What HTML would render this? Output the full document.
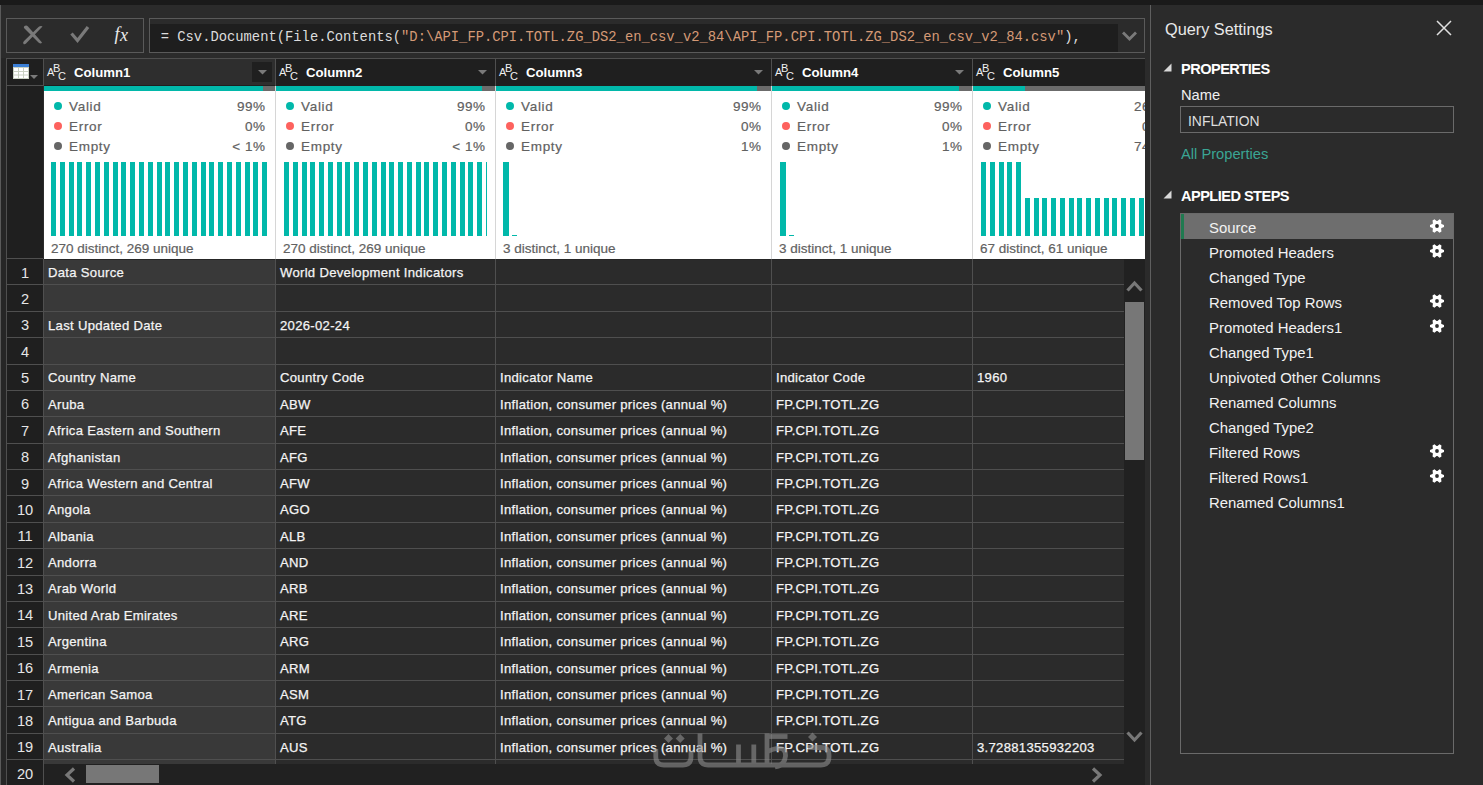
<!DOCTYPE html><html><head><meta charset="utf-8"><style>
html,body{margin:0;padding:0;}
body{width:1483px;height:785px;overflow:hidden;background:#2b2b2b;position:relative;font-family:"Liberation Sans",sans-serif;}
.a{position:absolute;}
.t{white-space:pre;line-height:20px;}
.mono{font-family:"Liberation Mono",monospace;font-size:13.82px;color:#dcdcdc;white-space:pre;line-height:20px;}
.hdr{font-weight:bold;font-size:13.2px;color:#ffffff;}
.abc{width:26px;height:26px;color:#f0f0f0;font-size:11px;}
.abc span{position:absolute;line-height:11px;}
.abc .A{left:1px;top:8px;}
.abc .B{left:7px;top:4px;}
.abc .C{left:12px;top:12px;}
.prof{font-size:13.5px;color:#616161;-webkit-text-stroke:0.2px #616161;}
.dist{font-size:13.5px;color:#616161;-webkit-text-stroke:0.2px #616161;}
.rn{font-size:14.6px;color:#e6e6e6;}
.cell{font-size:13.1px;letter-spacing:0.3px;color:#f4f4f4;-webkit-text-stroke:0.25px #f4f4f4;}
.qs{font-size:16.3px;color:#e8e8e8;}
.sect{font-weight:bold;font-size:14.6px;letter-spacing:-0.55px;color:#ffffff;}
.pn{font-size:14.7px;color:#f0f0f0;}
.infl{font-size:13.9px;color:#dedede;}
.step{font-size:14.9px;color:#f2f2f2;}
</style></head><body><div class="a" style="left:0px;top:0px;width:1483px;height:5px;background:#1a1a1a;"></div>
<div class="a" style="left:0px;top:5px;width:1px;height:780px;background:#5a5a5a;"></div>
<div class="a" style="left:1px;top:58px;width:5px;height:727px;background:#262626;"></div>
<div class="a" style="left:6px;top:18px;width:136px;height:33px;border:1px solid #5a5a5a;"></div>
<svg class="a" style="left:20px;top:23px" width="26" height="24" viewBox="0 0 26 24"><path d="M3.5 21 Q2.5 19.5 4 18 L18.5 4 Q20 2.8 22 3.2 L22.5 3.5 L6 20.5 Q4.8 21.8 3.5 21 Z" fill="#7a7a7a"/><path d="M4.5 3 Q6.5 2 8 3.5 L22 19.5 L21 20.5 Q19.5 20.5 18.5 19.5 L4 5 Q3.5 4 4.5 3 Z" fill="#7a7a7a"/></svg>
<svg class="a" style="left:69px;top:24px" width="22" height="20" viewBox="0 0 22 20"><path d="M2.5 9.5 L8.5 16.5 L19 3" stroke="#7a7a7a" stroke-width="3.2" fill="none"/></svg>
<div class="a" style="left:114.5px;top:18.6px;font-family:'Liberation Serif';font-style:italic;font-size:18px;color:#ececec;line-height:30px">f</div><div class="a" style="left:120px;top:19.6px;font-family:'Liberation Serif';font-style:italic;font-size:18px;color:#ececec;line-height:30px">x</div>
<div class="a" style="left:149px;top:18px;width:994px;height:33px;border:1px solid #5a5a5a;"></div>
<div class="a" style="left:150px;top:24px;width:968px;height:28px;background:#1e1e1e;"></div>
<div class="a mono" style="left:160.7px;top:26.7px;">= Csv.Document(File.Contents(<span style="color:#d59a76">"D:\API_FP.CPI.TOTL.ZG_DS2_en_csv_v2_84\API_FP.CPI.TOTL.ZG_DS2_en_csv_v2_84.csv"</span>),</div>
<svg class="a" style="left:1121px;top:30px" width="17" height="12" viewBox="0 0 17 12"><path d="M2 2.5 L8.5 9 L15 2.5" stroke="#7a7a7a" stroke-width="2.8" fill="none"/></svg>
<div class="a" style="left:6px;top:58px;width:1139px;height:1px;background:#4f4f4f;"></div>
<div class="a" style="left:6px;top:58px;width:1px;height:727px;background:#4f4f4f;"></div>
<div class="a" style="left:7px;top:59px;width:1138px;height:27px;background:#1f1f1f;"></div>
<svg class="a" style="left:13px;top:64px" width="26" height="16" viewBox="0 0 26 16">
<rect x="0" y="0" width="16" height="15" fill="#c9d1c2"/>
<rect x="0" y="0" width="16" height="3" fill="#3b7fd6"/>
<rect x="1" y="4" width="4" height="3" fill="#fff"/><rect x="6" y="4" width="4" height="3" fill="#fff"/><rect x="11" y="4" width="4" height="3" fill="#fff"/>
<rect x="1" y="8" width="4" height="2.5" fill="#fff"/><rect x="6" y="8" width="4" height="2.5" fill="#fff"/><rect x="11" y="8" width="4" height="2.5" fill="#fff"/>
<rect x="1" y="11.5" width="4" height="2.5" fill="#fff"/><rect x="6" y="11.5" width="4" height="2.5" fill="#fff"/><rect x="11" y="11.5" width="4" height="2.5" fill="#fff"/>
<path d="M17 11 L25 11 L21 15 Z" fill="#7a7a7a"/></svg>
<div class="a" style="left:7px;top:86px;width:36px;height:699px;background:#1f1f1f;"></div>
<div class="a" style="left:7px;top:85px;width:36px;height:1px;background:#4f4f4f;"></div>
<div class="a" style="left:43px;top:58px;width:1px;height:28px;background:#4f4f4f;"></div>
<div class="a" style="left:44px;top:59px;width:231px;height:26px;background:#2e2e2e;"></div>
<div class="a" style="left:252px;top:62px;width:20px;height:20px;background:#1f1f1f;"></div>
<div class="a abc" style="left:46px;top:59px"><span class="A">A</span><span class="B">B</span><span class="C">C</span></div>
<div class="a t hdr" style="left:74px;top:63.23px;">Column1</div>
<svg class="a" style="left:258px;top:70px" width="9" height="5" viewBox="0 0 9 5"><path d="M0 0 L9 0 L4.5 4.5 Z" fill="#7a7a7a"/></svg>
<div class="a" style="left:44px;top:86px;width:231px;height:5px;background:#6b6b6b;"></div>
<div class="a" style="left:44px;top:86px;width:219px;height:5px;background:#01b8aa;"></div>
<div class="a" style="left:44px;top:91px;width:231px;height:168px;background:#ffffff;"></div>
<div class="a" style="left:275px;top:58px;width:1px;height:28px;background:#4f4f4f;"></div>
<div class="a abc" style="left:278px;top:59px"><span class="A">A</span><span class="B">B</span><span class="C">C</span></div>
<div class="a t hdr" style="left:306px;top:63.23px;">Column2</div>
<svg class="a" style="left:478px;top:70px" width="9" height="5" viewBox="0 0 9 5"><path d="M0 0 L9 0 L4.5 4.5 Z" fill="#7a7a7a"/></svg>
<div class="a" style="left:276px;top:86px;width:219px;height:5px;background:#6b6b6b;"></div>
<div class="a" style="left:276px;top:86px;width:206px;height:5px;background:#01b8aa;"></div>
<div class="a" style="left:276px;top:91px;width:219px;height:168px;background:#ffffff;"></div>
<div class="a" style="left:495px;top:58px;width:1px;height:28px;background:#4f4f4f;"></div>
<div class="a abc" style="left:498px;top:59px"><span class="A">A</span><span class="B">B</span><span class="C">C</span></div>
<div class="a t hdr" style="left:526px;top:63.23px;">Column3</div>
<svg class="a" style="left:754px;top:70px" width="9" height="5" viewBox="0 0 9 5"><path d="M0 0 L9 0 L4.5 4.5 Z" fill="#7a7a7a"/></svg>
<div class="a" style="left:496px;top:86px;width:275px;height:5px;background:#6b6b6b;"></div>
<div class="a" style="left:496px;top:86px;width:261px;height:5px;background:#01b8aa;"></div>
<div class="a" style="left:496px;top:91px;width:275px;height:168px;background:#ffffff;"></div>
<div class="a" style="left:771px;top:58px;width:1px;height:28px;background:#4f4f4f;"></div>
<div class="a abc" style="left:774px;top:59px"><span class="A">A</span><span class="B">B</span><span class="C">C</span></div>
<div class="a t hdr" style="left:802px;top:63.23px;">Column4</div>
<svg class="a" style="left:955px;top:70px" width="9" height="5" viewBox="0 0 9 5"><path d="M0 0 L9 0 L4.5 4.5 Z" fill="#7a7a7a"/></svg>
<div class="a" style="left:772px;top:86px;width:200px;height:5px;background:#6b6b6b;"></div>
<div class="a" style="left:772px;top:86px;width:187px;height:5px;background:#01b8aa;"></div>
<div class="a" style="left:772px;top:91px;width:200px;height:168px;background:#ffffff;"></div>
<div class="a" style="left:972px;top:58px;width:1px;height:28px;background:#4f4f4f;"></div>
<div class="a abc" style="left:975px;top:59px"><span class="A">A</span><span class="B">B</span><span class="C">C</span></div>
<div class="a t hdr" style="left:1003px;top:63.23px;">Column5</div>
<div class="a" style="left:973px;top:86px;width:172px;height:5px;background:#6b6b6b;"></div>
<div class="a" style="left:973px;top:86px;width:52px;height:5px;background:#01b8aa;"></div>
<div class="a" style="left:973px;top:91px;width:172px;height:168px;background:#ffffff;"></div>
<div class="a" style="left:275px;top:86px;width:1px;height:173px;background:#d6d6d6;"></div>
<div class="a" style="left:495px;top:86px;width:1px;height:173px;background:#d6d6d6;"></div>
<div class="a" style="left:771px;top:86px;width:1px;height:173px;background:#d6d6d6;"></div>
<div class="a" style="left:972px;top:86px;width:1px;height:173px;background:#d6d6d6;"></div>
<div class="a" style="left:54px;top:102.2px;width:7.8px;height:7.8px;background:#01b8aa;border-radius:50%;"></div>
<div class="a t prof" style="left:69px;top:97.02px;letter-spacing:0.7px;">Valid</div>
<div class="a t prof" style="left:44px;top:97.02px;width:221.5px;text-align:right;letter-spacing:0.5px;">99%</div>
<div class="a" style="left:54px;top:122.2px;width:7.8px;height:7.8px;background:#fd625e;border-radius:50%;"></div>
<div class="a t prof" style="left:69px;top:117.02px;letter-spacing:0.7px;">Error</div>
<div class="a t prof" style="left:44px;top:117.02px;width:221.5px;text-align:right;letter-spacing:0.5px;">0%</div>
<div class="a" style="left:54px;top:142.2px;width:7.8px;height:7.8px;background:#666666;border-radius:50%;"></div>
<div class="a t prof" style="left:69px;top:137.02px;letter-spacing:0.7px;">Empty</div>
<div class="a t prof" style="left:44px;top:137.02px;width:221.5px;text-align:right;letter-spacing:0.5px;">&lt; 1%</div>
<div class="a t dist" style="left:51px;top:239.32px;">270 distinct, 269 unique</div>
<div class="a" style="left:286px;top:102.2px;width:7.8px;height:7.8px;background:#01b8aa;border-radius:50%;"></div>
<div class="a t prof" style="left:301px;top:97.02px;letter-spacing:0.7px;">Valid</div>
<div class="a t prof" style="left:276px;top:97.02px;width:209.5px;text-align:right;letter-spacing:0.5px;">99%</div>
<div class="a" style="left:286px;top:122.2px;width:7.8px;height:7.8px;background:#fd625e;border-radius:50%;"></div>
<div class="a t prof" style="left:301px;top:117.02px;letter-spacing:0.7px;">Error</div>
<div class="a t prof" style="left:276px;top:117.02px;width:209.5px;text-align:right;letter-spacing:0.5px;">0%</div>
<div class="a" style="left:286px;top:142.2px;width:7.8px;height:7.8px;background:#666666;border-radius:50%;"></div>
<div class="a t prof" style="left:301px;top:137.02px;letter-spacing:0.7px;">Empty</div>
<div class="a t prof" style="left:276px;top:137.02px;width:209.5px;text-align:right;letter-spacing:0.5px;">&lt; 1%</div>
<div class="a t dist" style="left:283px;top:239.32px;">270 distinct, 269 unique</div>
<div class="a" style="left:506px;top:102.2px;width:7.8px;height:7.8px;background:#01b8aa;border-radius:50%;"></div>
<div class="a t prof" style="left:521px;top:97.02px;letter-spacing:0.7px;">Valid</div>
<div class="a t prof" style="left:496px;top:97.02px;width:265.5px;text-align:right;letter-spacing:0.5px;">99%</div>
<div class="a" style="left:506px;top:122.2px;width:7.8px;height:7.8px;background:#fd625e;border-radius:50%;"></div>
<div class="a t prof" style="left:521px;top:117.02px;letter-spacing:0.7px;">Error</div>
<div class="a t prof" style="left:496px;top:117.02px;width:265.5px;text-align:right;letter-spacing:0.5px;">0%</div>
<div class="a" style="left:506px;top:142.2px;width:7.8px;height:7.8px;background:#666666;border-radius:50%;"></div>
<div class="a t prof" style="left:521px;top:137.02px;letter-spacing:0.7px;">Empty</div>
<div class="a t prof" style="left:496px;top:137.02px;width:265.5px;text-align:right;letter-spacing:0.5px;">1%</div>
<div class="a t dist" style="left:503px;top:239.32px;">3 distinct, 1 unique</div>
<div class="a" style="left:782px;top:102.2px;width:7.8px;height:7.8px;background:#01b8aa;border-radius:50%;"></div>
<div class="a t prof" style="left:797px;top:97.02px;letter-spacing:0.7px;">Valid</div>
<div class="a t prof" style="left:772px;top:97.02px;width:190.5px;text-align:right;letter-spacing:0.5px;">99%</div>
<div class="a" style="left:782px;top:122.2px;width:7.8px;height:7.8px;background:#fd625e;border-radius:50%;"></div>
<div class="a t prof" style="left:797px;top:117.02px;letter-spacing:0.7px;">Error</div>
<div class="a t prof" style="left:772px;top:117.02px;width:190.5px;text-align:right;letter-spacing:0.5px;">0%</div>
<div class="a" style="left:782px;top:142.2px;width:7.8px;height:7.8px;background:#666666;border-radius:50%;"></div>
<div class="a t prof" style="left:797px;top:137.02px;letter-spacing:0.7px;">Empty</div>
<div class="a t prof" style="left:772px;top:137.02px;width:190.5px;text-align:right;letter-spacing:0.5px;">1%</div>
<div class="a t dist" style="left:779px;top:239.32px;">3 distinct, 1 unique</div>
<div class="a" style="left:983px;top:102.2px;width:7.8px;height:7.8px;background:#01b8aa;border-radius:50%;"></div>
<div class="a t prof" style="left:998px;top:97.02px;letter-spacing:0.7px;">Valid</div>
<div class="a t prof" style="left:973px;top:97.02px;width:189.5px;text-align:right;letter-spacing:0.5px;">26%</div>
<div class="a" style="left:983px;top:122.2px;width:7.8px;height:7.8px;background:#fd625e;border-radius:50%;"></div>
<div class="a t prof" style="left:998px;top:117.02px;letter-spacing:0.7px;">Error</div>
<div class="a t prof" style="left:973px;top:117.02px;width:189.5px;text-align:right;letter-spacing:0.5px;">0%</div>
<div class="a" style="left:983px;top:142.2px;width:7.8px;height:7.8px;background:#666666;border-radius:50%;"></div>
<div class="a t prof" style="left:998px;top:137.02px;letter-spacing:0.7px;">Empty</div>
<div class="a t prof" style="left:973px;top:137.02px;width:189.5px;text-align:right;letter-spacing:0.5px;">74%</div>
<div class="a t dist" style="left:980px;top:239.32px;">67 distinct, 61 unique</div>
<div class="a" style="left:51px;top:162px;width:5px;height:74px;background:#01b8aa;"></div>
<div class="a" style="left:60px;top:162px;width:5px;height:74px;background:#01b8aa;"></div>
<div class="a" style="left:69px;top:162px;width:5px;height:74px;background:#01b8aa;"></div>
<div class="a" style="left:77px;top:162px;width:5px;height:74px;background:#01b8aa;"></div>
<div class="a" style="left:86px;top:162px;width:5px;height:74px;background:#01b8aa;"></div>
<div class="a" style="left:95px;top:162px;width:5px;height:74px;background:#01b8aa;"></div>
<div class="a" style="left:104px;top:162px;width:5px;height:74px;background:#01b8aa;"></div>
<div class="a" style="left:113px;top:162px;width:5px;height:74px;background:#01b8aa;"></div>
<div class="a" style="left:121px;top:162px;width:5px;height:74px;background:#01b8aa;"></div>
<div class="a" style="left:130px;top:162px;width:5px;height:74px;background:#01b8aa;"></div>
<div class="a" style="left:139px;top:162px;width:5px;height:74px;background:#01b8aa;"></div>
<div class="a" style="left:148px;top:162px;width:5px;height:74px;background:#01b8aa;"></div>
<div class="a" style="left:157px;top:162px;width:5px;height:74px;background:#01b8aa;"></div>
<div class="a" style="left:165px;top:162px;width:5px;height:74px;background:#01b8aa;"></div>
<div class="a" style="left:174px;top:162px;width:5px;height:74px;background:#01b8aa;"></div>
<div class="a" style="left:183px;top:162px;width:5px;height:74px;background:#01b8aa;"></div>
<div class="a" style="left:192px;top:162px;width:5px;height:74px;background:#01b8aa;"></div>
<div class="a" style="left:201px;top:162px;width:5px;height:74px;background:#01b8aa;"></div>
<div class="a" style="left:209px;top:162px;width:5px;height:74px;background:#01b8aa;"></div>
<div class="a" style="left:218px;top:162px;width:5px;height:74px;background:#01b8aa;"></div>
<div class="a" style="left:227px;top:162px;width:5px;height:74px;background:#01b8aa;"></div>
<div class="a" style="left:236px;top:162px;width:5px;height:74px;background:#01b8aa;"></div>
<div class="a" style="left:245px;top:162px;width:5px;height:74px;background:#01b8aa;"></div>
<div class="a" style="left:253px;top:162px;width:5px;height:74px;background:#01b8aa;"></div>
<div class="a" style="left:262px;top:162px;width:5px;height:74px;background:#01b8aa;"></div>
<div class="a" style="left:284px;top:162px;width:5px;height:74px;background:#01b8aa;"></div>
<div class="a" style="left:293px;top:162px;width:5px;height:74px;background:#01b8aa;"></div>
<div class="a" style="left:302px;top:162px;width:5px;height:74px;background:#01b8aa;"></div>
<div class="a" style="left:310px;top:162px;width:5px;height:74px;background:#01b8aa;"></div>
<div class="a" style="left:319px;top:162px;width:5px;height:74px;background:#01b8aa;"></div>
<div class="a" style="left:328px;top:162px;width:5px;height:74px;background:#01b8aa;"></div>
<div class="a" style="left:337px;top:162px;width:5px;height:74px;background:#01b8aa;"></div>
<div class="a" style="left:345px;top:162px;width:5px;height:74px;background:#01b8aa;"></div>
<div class="a" style="left:354px;top:162px;width:5px;height:74px;background:#01b8aa;"></div>
<div class="a" style="left:363px;top:162px;width:5px;height:74px;background:#01b8aa;"></div>
<div class="a" style="left:372px;top:162px;width:5px;height:74px;background:#01b8aa;"></div>
<div class="a" style="left:381px;top:162px;width:5px;height:74px;background:#01b8aa;"></div>
<div class="a" style="left:389px;top:162px;width:5px;height:74px;background:#01b8aa;"></div>
<div class="a" style="left:398px;top:162px;width:5px;height:74px;background:#01b8aa;"></div>
<div class="a" style="left:407px;top:162px;width:5px;height:74px;background:#01b8aa;"></div>
<div class="a" style="left:416px;top:162px;width:5px;height:74px;background:#01b8aa;"></div>
<div class="a" style="left:424px;top:162px;width:5px;height:74px;background:#01b8aa;"></div>
<div class="a" style="left:433px;top:162px;width:5px;height:74px;background:#01b8aa;"></div>
<div class="a" style="left:442px;top:162px;width:5px;height:74px;background:#01b8aa;"></div>
<div class="a" style="left:451px;top:162px;width:5px;height:74px;background:#01b8aa;"></div>
<div class="a" style="left:460px;top:162px;width:5px;height:74px;background:#01b8aa;"></div>
<div class="a" style="left:468px;top:162px;width:5px;height:74px;background:#01b8aa;"></div>
<div class="a" style="left:477px;top:162px;width:5px;height:74px;background:#01b8aa;"></div>
<div class="a" style="left:486px;top:162px;width:1px;height:74px;background:#01b8aa;"></div>
<div class="a" style="left:503px;top:162px;width:6px;height:74px;background:#01b8aa;"></div>
<div class="a" style="left:512px;top:235px;width:5px;height:1px;background:#01b8aa;"></div>
<div class="a" style="left:780px;top:162px;width:6px;height:74px;background:#01b8aa;"></div>
<div class="a" style="left:789px;top:235px;width:5px;height:1px;background:#01b8aa;"></div>
<div class="a" style="left:981px;top:162px;width:5px;height:74px;background:#01b8aa;"></div>
<div class="a" style="left:990px;top:162px;width:5px;height:74px;background:#01b8aa;"></div>
<div class="a" style="left:999px;top:162px;width:5px;height:74px;background:#01b8aa;"></div>
<div class="a" style="left:1007px;top:162px;width:5px;height:74px;background:#01b8aa;"></div>
<div class="a" style="left:1016px;top:162px;width:5px;height:74px;background:#01b8aa;"></div>
<div class="a" style="left:1025px;top:198px;width:5px;height:38px;background:#01b8aa;"></div>
<div class="a" style="left:1034px;top:198px;width:5px;height:38px;background:#01b8aa;"></div>
<div class="a" style="left:1042px;top:198px;width:5px;height:38px;background:#01b8aa;"></div>
<div class="a" style="left:1051px;top:198px;width:5px;height:38px;background:#01b8aa;"></div>
<div class="a" style="left:1060px;top:198px;width:5px;height:38px;background:#01b8aa;"></div>
<div class="a" style="left:1069px;top:198px;width:5px;height:38px;background:#01b8aa;"></div>
<div class="a" style="left:1077px;top:198px;width:5px;height:38px;background:#01b8aa;"></div>
<div class="a" style="left:1086px;top:198px;width:5px;height:38px;background:#01b8aa;"></div>
<div class="a" style="left:1095px;top:198px;width:5px;height:38px;background:#01b8aa;"></div>
<div class="a" style="left:1104px;top:198px;width:5px;height:38px;background:#01b8aa;"></div>
<div class="a" style="left:1112px;top:198px;width:5px;height:38px;background:#01b8aa;"></div>
<div class="a" style="left:1121px;top:198px;width:5px;height:38px;background:#01b8aa;"></div>
<div class="a" style="left:1130px;top:198px;width:5px;height:38px;background:#01b8aa;"></div>
<div class="a" style="left:1139px;top:198px;width:5px;height:38px;background:#01b8aa;"></div>
<div class="a" style="left:44px;top:259px;width:231px;height:526px;background:#393939;"></div>
<div class="a" style="left:276px;top:259px;width:848px;height:526px;background:#2b2b2b;"></div>
<div class="a" style="left:7px;top:258px;width:36px;height:1px;background:#4f4f4f;"></div>
<div class="a" style="left:44px;top:259px;width:1080px;height:1px;background:#262626;"></div>
<div class="a" style="left:7px;top:284px;width:1117px;height:1px;background:#4f4f4f;"></div>
<div class="a" style="left:7px;top:311px;width:1117px;height:1px;background:#4f4f4f;"></div>
<div class="a" style="left:7px;top:337px;width:1117px;height:1px;background:#4f4f4f;"></div>
<div class="a" style="left:7px;top:364px;width:1117px;height:1px;background:#4f4f4f;"></div>
<div class="a" style="left:7px;top:390px;width:1117px;height:1px;background:#4f4f4f;"></div>
<div class="a" style="left:7px;top:416px;width:1117px;height:1px;background:#4f4f4f;"></div>
<div class="a" style="left:7px;top:443px;width:1117px;height:1px;background:#4f4f4f;"></div>
<div class="a" style="left:7px;top:469px;width:1117px;height:1px;background:#4f4f4f;"></div>
<div class="a" style="left:7px;top:495px;width:1117px;height:1px;background:#4f4f4f;"></div>
<div class="a" style="left:7px;top:522px;width:1117px;height:1px;background:#4f4f4f;"></div>
<div class="a" style="left:7px;top:548px;width:1117px;height:1px;background:#4f4f4f;"></div>
<div class="a" style="left:7px;top:575px;width:1117px;height:1px;background:#4f4f4f;"></div>
<div class="a" style="left:7px;top:601px;width:1117px;height:1px;background:#4f4f4f;"></div>
<div class="a" style="left:7px;top:627px;width:1117px;height:1px;background:#4f4f4f;"></div>
<div class="a" style="left:7px;top:654px;width:1117px;height:1px;background:#4f4f4f;"></div>
<div class="a" style="left:7px;top:680px;width:1117px;height:1px;background:#4f4f4f;"></div>
<div class="a" style="left:7px;top:706px;width:1117px;height:1px;background:#4f4f4f;"></div>
<div class="a" style="left:7px;top:733px;width:1117px;height:1px;background:#4f4f4f;"></div>
<div class="a" style="left:7px;top:759px;width:1117px;height:1px;background:#4f4f4f;"></div>
<div class="a" style="left:7px;top:786px;width:1117px;height:1px;background:#4f4f4f;"></div>
<div class="a" style="left:43px;top:259px;width:1px;height:526px;background:#4f4f4f;"></div>
<div class="a" style="left:275px;top:259px;width:1px;height:526px;background:#4f4f4f;"></div>
<div class="a" style="left:495px;top:259px;width:1px;height:526px;background:#4f4f4f;"></div>
<div class="a" style="left:771px;top:259px;width:1px;height:526px;background:#4f4f4f;"></div>
<div class="a" style="left:972px;top:259px;width:1px;height:526px;background:#4f4f4f;"></div>
<div class="a t rn" style="left:7px;top:262.94px;width:36px;text-align:center;">1</div>
<div class="a t cell" style="left:48px;top:263.46px;">Data Source</div>
<div class="a t cell" style="left:280px;top:263.46px;">World Development Indicators</div>
<div class="a t rn" style="left:7px;top:288.94px;width:36px;text-align:center;">2</div>
<div class="a t rn" style="left:7px;top:314.94px;width:36px;text-align:center;">3</div>
<div class="a t cell" style="left:48px;top:316.46px;">Last Updated Date</div>
<div class="a t cell" style="left:280px;top:316.46px;">2026-02-24</div>
<div class="a t rn" style="left:7px;top:341.94px;width:36px;text-align:center;">4</div>
<div class="a t rn" style="left:7px;top:367.94px;width:36px;text-align:center;">5</div>
<div class="a t cell" style="left:48px;top:368.46px;">Country Name</div>
<div class="a t cell" style="left:280px;top:368.46px;">Country Code</div>
<div class="a t cell" style="left:500px;top:368.46px;">Indicator Name</div>
<div class="a t cell" style="left:776px;top:368.46px;">Indicator Code</div>
<div class="a t cell" style="left:977px;top:368.46px;">1960</div>
<div class="a t rn" style="left:7px;top:393.94px;width:36px;text-align:center;">6</div>
<div class="a t cell" style="left:48px;top:395.46px;">Aruba</div>
<div class="a t cell" style="left:280px;top:395.46px;">ABW</div>
<div class="a t cell" style="left:500px;top:395.46px;">Inflation, consumer prices (annual %)</div>
<div class="a t cell" style="left:776px;top:395.46px;">FP.CPI.TOTL.ZG</div>
<div class="a t rn" style="left:7px;top:420.94px;width:36px;text-align:center;">7</div>
<div class="a t cell" style="left:48px;top:421.46px;">Africa Eastern and Southern</div>
<div class="a t cell" style="left:280px;top:421.46px;">AFE</div>
<div class="a t cell" style="left:500px;top:421.46px;">Inflation, consumer prices (annual %)</div>
<div class="a t cell" style="left:776px;top:421.46px;">FP.CPI.TOTL.ZG</div>
<div class="a t rn" style="left:7px;top:446.94px;width:36px;text-align:center;">8</div>
<div class="a t cell" style="left:48px;top:448.46px;">Afghanistan</div>
<div class="a t cell" style="left:280px;top:448.46px;">AFG</div>
<div class="a t cell" style="left:500px;top:448.46px;">Inflation, consumer prices (annual %)</div>
<div class="a t cell" style="left:776px;top:448.46px;">FP.CPI.TOTL.ZG</div>
<div class="a t rn" style="left:7px;top:473.94px;width:36px;text-align:center;">9</div>
<div class="a t cell" style="left:48px;top:474.46px;">Africa Western and Central</div>
<div class="a t cell" style="left:280px;top:474.46px;">AFW</div>
<div class="a t cell" style="left:500px;top:474.46px;">Inflation, consumer prices (annual %)</div>
<div class="a t cell" style="left:776px;top:474.46px;">FP.CPI.TOTL.ZG</div>
<div class="a t rn" style="left:7px;top:499.94px;width:36px;text-align:center;">10</div>
<div class="a t cell" style="left:48px;top:500.46px;">Angola</div>
<div class="a t cell" style="left:280px;top:500.46px;">AGO</div>
<div class="a t cell" style="left:500px;top:500.46px;">Inflation, consumer prices (annual %)</div>
<div class="a t cell" style="left:776px;top:500.46px;">FP.CPI.TOTL.ZG</div>
<div class="a t rn" style="left:7px;top:525.94px;width:36px;text-align:center;">11</div>
<div class="a t cell" style="left:48px;top:527.46px;">Albania</div>
<div class="a t cell" style="left:280px;top:527.46px;">ALB</div>
<div class="a t cell" style="left:500px;top:527.46px;">Inflation, consumer prices (annual %)</div>
<div class="a t cell" style="left:776px;top:527.46px;">FP.CPI.TOTL.ZG</div>
<div class="a t rn" style="left:7px;top:552.94px;width:36px;text-align:center;">12</div>
<div class="a t cell" style="left:48px;top:553.46px;">Andorra</div>
<div class="a t cell" style="left:280px;top:553.46px;">AND</div>
<div class="a t cell" style="left:500px;top:553.46px;">Inflation, consumer prices (annual %)</div>
<div class="a t cell" style="left:776px;top:553.46px;">FP.CPI.TOTL.ZG</div>
<div class="a t rn" style="left:7px;top:578.94px;width:36px;text-align:center;">13</div>
<div class="a t cell" style="left:48px;top:579.46px;">Arab World</div>
<div class="a t cell" style="left:280px;top:579.46px;">ARB</div>
<div class="a t cell" style="left:500px;top:579.46px;">Inflation, consumer prices (annual %)</div>
<div class="a t cell" style="left:776px;top:579.46px;">FP.CPI.TOTL.ZG</div>
<div class="a t rn" style="left:7px;top:604.94px;width:36px;text-align:center;">14</div>
<div class="a t cell" style="left:48px;top:606.46px;">United Arab Emirates</div>
<div class="a t cell" style="left:280px;top:606.46px;">ARE</div>
<div class="a t cell" style="left:500px;top:606.46px;">Inflation, consumer prices (annual %)</div>
<div class="a t cell" style="left:776px;top:606.46px;">FP.CPI.TOTL.ZG</div>
<div class="a t rn" style="left:7px;top:631.94px;width:36px;text-align:center;">15</div>
<div class="a t cell" style="left:48px;top:632.46px;">Argentina</div>
<div class="a t cell" style="left:280px;top:632.46px;">ARG</div>
<div class="a t cell" style="left:500px;top:632.46px;">Inflation, consumer prices (annual %)</div>
<div class="a t cell" style="left:776px;top:632.46px;">FP.CPI.TOTL.ZG</div>
<div class="a t rn" style="left:7px;top:657.94px;width:36px;text-align:center;">16</div>
<div class="a t cell" style="left:48px;top:659.46px;">Armenia</div>
<div class="a t cell" style="left:280px;top:659.46px;">ARM</div>
<div class="a t cell" style="left:500px;top:659.46px;">Inflation, consumer prices (annual %)</div>
<div class="a t cell" style="left:776px;top:659.46px;">FP.CPI.TOTL.ZG</div>
<div class="a t rn" style="left:7px;top:684.94px;width:36px;text-align:center;">17</div>
<div class="a t cell" style="left:48px;top:685.46px;">American Samoa</div>
<div class="a t cell" style="left:280px;top:685.46px;">ASM</div>
<div class="a t cell" style="left:500px;top:685.46px;">Inflation, consumer prices (annual %)</div>
<div class="a t cell" style="left:776px;top:685.46px;">FP.CPI.TOTL.ZG</div>
<div class="a t rn" style="left:7px;top:710.94px;width:36px;text-align:center;">18</div>
<div class="a t cell" style="left:48px;top:711.46px;">Antigua and Barbuda</div>
<div class="a t cell" style="left:280px;top:711.46px;">ATG</div>
<div class="a t cell" style="left:500px;top:711.46px;">Inflation, consumer prices (annual %)</div>
<div class="a t cell" style="left:776px;top:711.46px;">FP.CPI.TOTL.ZG</div>
<div class="a t rn" style="left:7px;top:736.94px;width:36px;text-align:center;">19</div>
<div class="a t cell" style="left:48px;top:738.46px;">Australia</div>
<div class="a t cell" style="left:280px;top:738.46px;">AUS</div>
<div class="a t cell" style="left:500px;top:738.46px;">Inflation, consumer prices (annual %)</div>
<div class="a t cell" style="left:776px;top:738.46px;">FP.CPI.TOTL.ZG</div>
<div class="a t cell" style="left:977px;top:738.46px;">3.72881355932203</div>
<div class="a t rn" style="left:7px;top:763.94px;width:36px;text-align:center;">20</div>
<div class="a" style="left:1124px;top:259px;width:21px;height:505px;background:#212121;"></div>
<svg class="a" style="left:1126px;top:279px" width="17" height="14" viewBox="0 0 17 14"><path d="M1.5 11.5 L8.5 4 L15.5 11.5" stroke="#787878" stroke-width="3.2" fill="none"/></svg>
<div class="a" style="left:1125px;top:302px;width:19px;height:158px;background:#777777;"></div>
<svg class="a" style="left:1126px;top:730px" width="17" height="14" viewBox="0 0 17 14"><path d="M1.5 2.5 L8.5 10 L15.5 2.5" stroke="#787878" stroke-width="3.2" fill="none"/></svg>
<div class="a" style="left:44px;top:764px;width:1101px;height:21px;background:#212121;"></div>
<svg class="a" style="left:63px;top:767px" width="14" height="16" viewBox="0 0 14 16"><path d="M11 1.5 L4 8 L11 14.5" stroke="#787878" stroke-width="3.2" fill="none"/></svg>
<div class="a" style="left:86px;top:765px;width:73px;height:18px;background:#777777;"></div>
<svg class="a" style="left:1090px;top:767px" width="14" height="16" viewBox="0 0 14 16"><path d="M3 1.5 L10 8 L3 14.5" stroke="#787878" stroke-width="3.2" fill="none"/></svg>
<div class="a" style="left:1145px;top:5px;width:6px;height:780px;background:#2b2b2b;"></div>
<div class="a" style="left:1150px;top:5px;width:1px;height:780px;background:#5f5f5f;"></div>
<div class="a" style="left:1151px;top:5px;width:332px;height:780px;background:#2b2b2b;"></div>
<div class="a t qs" style="left:1165px;top:19.35px;">Query Settings</div>
<svg class="a" style="left:1435px;top:19px" width="18" height="18" viewBox="0 0 18 18"><path d="M2 2 L16 16 M16 2 L2 16" stroke="#e0e0e0" stroke-width="1.5" fill="none"/></svg>
<svg class="a" style="left:1163px;top:63px" width="9" height="9" viewBox="0 0 9 9"><path d="M8.5 0.5 L8.5 8.5 L0.5 8.5 Z" fill="#d8d8d8"/></svg>
<div class="a t sect" style="left:1181px;top:58.94px;">PROPERTIES</div>
<div class="a t pn" style="left:1181px;top:84.91px;">Name</div>
<div class="a" style="left:1180px;top:106px;width:272px;height:25px;border:1px solid #6a6a6a;"></div>
<div class="a t infl" style="left:1188px;top:111.18px;">INFLATION</div>
<div class="a t pn" style="left:1181px;top:143.91px;color:#3aa594;">All Properties</div>
<svg class="a" style="left:1163px;top:190px" width="9" height="9" viewBox="0 0 9 9"><path d="M8.5 0.5 L8.5 8.5 L0.5 8.5 Z" fill="#d8d8d8"/></svg>
<div class="a t sect" style="left:1181px;top:185.94px;">APPLIED STEPS</div>
<div class="a" style="left:1180px;top:213px;width:272px;height:539px;border:1px solid #6a6a6a;"></div>
<div class="a" style="left:1181px;top:214px;width:272px;height:25px;background:#6e6e6e;"></div>
<div class="a" style="left:1181px;top:214px;width:3px;height:25px;background:#1f7a50;"></div>
<div class="a t step" style="left:1209px;top:217.74px;">Source</div>
<svg class="a" style="left:1429px;top:218px" width="16" height="16" viewBox="0 0 16 16"><path d="M15.01 6.89 L15.01 9.11 L12.53 10.11 L12.10 10.87 L12.47 13.52 L10.54 14.63 L8.44 12.98 L7.56 12.98 L5.46 14.63 L3.53 13.52 L3.90 10.87 L3.47 10.11 L0.99 9.11 L0.99 6.89 L3.47 5.89 L3.90 5.13 L3.53 2.48 L5.46 1.37 L7.56 3.02 L8.44 3.02 L10.54 1.37 L12.47 2.48 L12.10 5.13 L12.53 5.89 Z" fill="#ffffff"/><circle cx="8" cy="8" r="1.9" fill="#2e2e2e"/></svg>
<div class="a t step" style="left:1209px;top:242.74px;">Promoted Headers</div>
<svg class="a" style="left:1429px;top:243px" width="16" height="16" viewBox="0 0 16 16"><path d="M15.01 6.89 L15.01 9.11 L12.53 10.11 L12.10 10.87 L12.47 13.52 L10.54 14.63 L8.44 12.98 L7.56 12.98 L5.46 14.63 L3.53 13.52 L3.90 10.87 L3.47 10.11 L0.99 9.11 L0.99 6.89 L3.47 5.89 L3.90 5.13 L3.53 2.48 L5.46 1.37 L7.56 3.02 L8.44 3.02 L10.54 1.37 L12.47 2.48 L12.10 5.13 L12.53 5.89 Z" fill="#ffffff"/><circle cx="8" cy="8" r="1.9" fill="#2e2e2e"/></svg>
<div class="a t step" style="left:1209px;top:267.74px;">Changed Type</div>
<div class="a t step" style="left:1209px;top:292.74px;">Removed Top Rows</div>
<svg class="a" style="left:1429px;top:293px" width="16" height="16" viewBox="0 0 16 16"><path d="M15.01 6.89 L15.01 9.11 L12.53 10.11 L12.10 10.87 L12.47 13.52 L10.54 14.63 L8.44 12.98 L7.56 12.98 L5.46 14.63 L3.53 13.52 L3.90 10.87 L3.47 10.11 L0.99 9.11 L0.99 6.89 L3.47 5.89 L3.90 5.13 L3.53 2.48 L5.46 1.37 L7.56 3.02 L8.44 3.02 L10.54 1.37 L12.47 2.48 L12.10 5.13 L12.53 5.89 Z" fill="#ffffff"/><circle cx="8" cy="8" r="1.9" fill="#2e2e2e"/></svg>
<div class="a t step" style="left:1209px;top:317.74px;">Promoted Headers1</div>
<svg class="a" style="left:1429px;top:318px" width="16" height="16" viewBox="0 0 16 16"><path d="M15.01 6.89 L15.01 9.11 L12.53 10.11 L12.10 10.87 L12.47 13.52 L10.54 14.63 L8.44 12.98 L7.56 12.98 L5.46 14.63 L3.53 13.52 L3.90 10.87 L3.47 10.11 L0.99 9.11 L0.99 6.89 L3.47 5.89 L3.90 5.13 L3.53 2.48 L5.46 1.37 L7.56 3.02 L8.44 3.02 L10.54 1.37 L12.47 2.48 L12.10 5.13 L12.53 5.89 Z" fill="#ffffff"/><circle cx="8" cy="8" r="1.9" fill="#2e2e2e"/></svg>
<div class="a t step" style="left:1209px;top:342.74px;">Changed Type1</div>
<div class="a t step" style="left:1209px;top:367.74px;">Unpivoted Other Columns</div>
<div class="a t step" style="left:1209px;top:392.74px;">Renamed Columns</div>
<div class="a t step" style="left:1209px;top:417.74px;">Changed Type2</div>
<div class="a t step" style="left:1209px;top:442.74px;">Filtered Rows</div>
<svg class="a" style="left:1429px;top:443px" width="16" height="16" viewBox="0 0 16 16"><path d="M15.01 6.89 L15.01 9.11 L12.53 10.11 L12.10 10.87 L12.47 13.52 L10.54 14.63 L8.44 12.98 L7.56 12.98 L5.46 14.63 L3.53 13.52 L3.90 10.87 L3.47 10.11 L0.99 9.11 L0.99 6.89 L3.47 5.89 L3.90 5.13 L3.53 2.48 L5.46 1.37 L7.56 3.02 L8.44 3.02 L10.54 1.37 L12.47 2.48 L12.10 5.13 L12.53 5.89 Z" fill="#ffffff"/><circle cx="8" cy="8" r="1.9" fill="#2e2e2e"/></svg>
<div class="a t step" style="left:1209px;top:467.74px;">Filtered Rows1</div>
<svg class="a" style="left:1429px;top:468px" width="16" height="16" viewBox="0 0 16 16"><path d="M15.01 6.89 L15.01 9.11 L12.53 10.11 L12.10 10.87 L12.47 13.52 L10.54 14.63 L8.44 12.98 L7.56 12.98 L5.46 14.63 L3.53 13.52 L3.90 10.87 L3.47 10.11 L0.99 9.11 L0.99 6.89 L3.47 5.89 L3.90 5.13 L3.53 2.48 L5.46 1.37 L7.56 3.02 L8.44 3.02 L10.54 1.37 L12.47 2.48 L12.10 5.13 L12.53 5.89 Z" fill="#ffffff"/><circle cx="8" cy="8" r="1.9" fill="#2e2e2e"/></svg>
<div class="a t step" style="left:1209px;top:492.74px;">Renamed Columns1</div>
<svg class="a" style="left:640px;top:725px" width="200" height="50" viewBox="640 725 200 50">
<g fill="none" stroke="#8c8c8c" stroke-width="4.8" stroke-linecap="butt" opacity="0.62">
<path d="M655.8 749 L655.8 757 Q655.8 765 663.8 765 L683 765 Q691 765 691 757 L691 751"/>
<path d="M700 733.5 L700 757 Q700 765 708 765 L821 765 Q829 765 829 757 L829 755 Q829 747.5 821 747.5 L808 747.5"/>
<path d="M738.5 744.5 L738.5 765"/>
<path d="M753.8 744.5 L753.8 765"/>
<path d="M767 733.5 L767 765"/>
<path d="M769 736.5 L787.5 736.5"/>
<path d="M766 752 Q786 743 785.5 756 Q784.5 765.5 775 767"/>
</g>
<g fill="#8c8c8c" opacity="0.62">
<path d="M668.5 734 L673 738.5 L668.5 743 L664 738.5 Z"/><path d="M680.2 734 L684.7 738.5 L680.2 743 L675.7 738.5 Z"/><path d="M812.5 732.5 L817 737 L812.5 741.5 L808 737 Z"/>
</g></svg></body></html>
